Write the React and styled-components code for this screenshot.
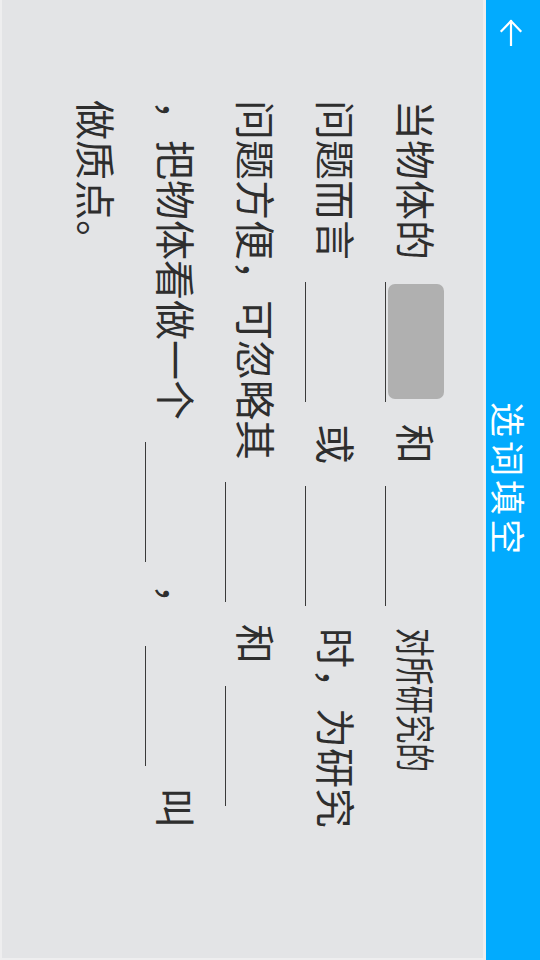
import React from "react";
import styled, { createGlobalStyle } from "styled-components";

const Global = createGlobalStyle`
  html, body {
    margin: 0;
    padding: 0;
    width: 540px;
    height: 960px;
    overflow: hidden;
    background: #eeeeef;
  }
  * { box-sizing: border-box; }
`;

const Screen = styled.div`
  width: 960px;
  height: 540px;
  transform-origin: top left;
  transform: translateX(540px) rotate(90deg);
  display: flex;
  flex-direction: column;
  font-family: "Noto Sans CJK SC", "Noto Sans", sans-serif;
  background: #eeeeef;
`;

const Header = styled.header`
  height: 54px;
  flex: none;
  background: #02abfe;
  display: grid;
  grid-template-columns: 1fr auto 1fr;
  align-items: center;
  padding: 0 18px;
  color: #fff;
`;

const BackButton = styled.button`
  justify-self: start;
  border: 0;
  background: none;
  padding: 0;
  display: flex;
  color: #fff;
`;

const Title = styled.h1`
  margin: 0;
  font-size: 35px;
  font-weight: 400;
  letter-spacing: 4px;
  line-height: 54px;
  padding-top: 4px;
`;

const Body = styled.main`
  flex: 1;
  background: #e3e4e6;
  border: 2px solid #eeeeef;
  border-top-width: 3px;
  border-left-width: 0;
  padding: 26px 0 0 100px;
  display: flex;
  flex-direction: column;
`;

const Line = styled.div`
  display: flex;
  align-items: flex-start;
  height: 80px;
`;

const Words = styled.span`
  display: inline-block;
  font-size: 40px;
  line-height: 80px;
  color: #2e2e2e;
  white-space: pre;
  transform-origin: left center;
  transform: ${(p) => (p.$condensed ? "scaleX(0.72)" : "none")};
`;

const Blank = styled.span`
  width: 120px;
  height: 72px;
  margin: 0 22px;
  border-bottom: 1px solid #3a3a3a;
  padding: 13px 3px 2px 2px;
  display: flex;
`;

const Answer = styled.span`
  flex: 1;
  background: #b0b0b0;
  border-radius: 7px;
`;

const Arrow = () => (
  <svg width="30" height="24" viewBox="0 0 30 24" fill="none" stroke="currentColor" strokeWidth="2.2" strokeLinecap="square">
    <path d="M3 12 H27" />
    <path d="M13 2.5 L3 12 L13 21.5" strokeLinejoin="miter" />
  </svg>
);

export default function App() {
  return (
    <>
      <Global />
      <Screen>
        <Header>
          <BackButton aria-label="返回">
            <Arrow />
          </BackButton>
          <Title>选词填空</Title>
          <span />
        </Header>
        <Body>
          <Line>
            <Words>当物体的</Words>
            <Blank>
              <Answer />
            </Blank>
            <Words>和</Words>
            <Blank />
            <Words $condensed>对所研究的</Words>
          </Line>
          <Line>
            <Words>问题而言</Words>
            <Blank />
            <Words>或</Words>
            <Blank />
            <Words>时，为研究</Words>
          </Line>
          <Line>
            <Words>问题方便，可忽略其</Words>
            <Blank />
            <Words>和</Words>
            <Blank />
          </Line>
          <Line>
            <Words>，把物体看做一个</Words>
            <Blank />
            <Words>，</Words>
            <Blank />
            <Words>叫</Words>
          </Line>
          <Line>
            <Words>做质点。</Words>
          </Line>
        </Body>
      </Screen>
    </>
  );
}
